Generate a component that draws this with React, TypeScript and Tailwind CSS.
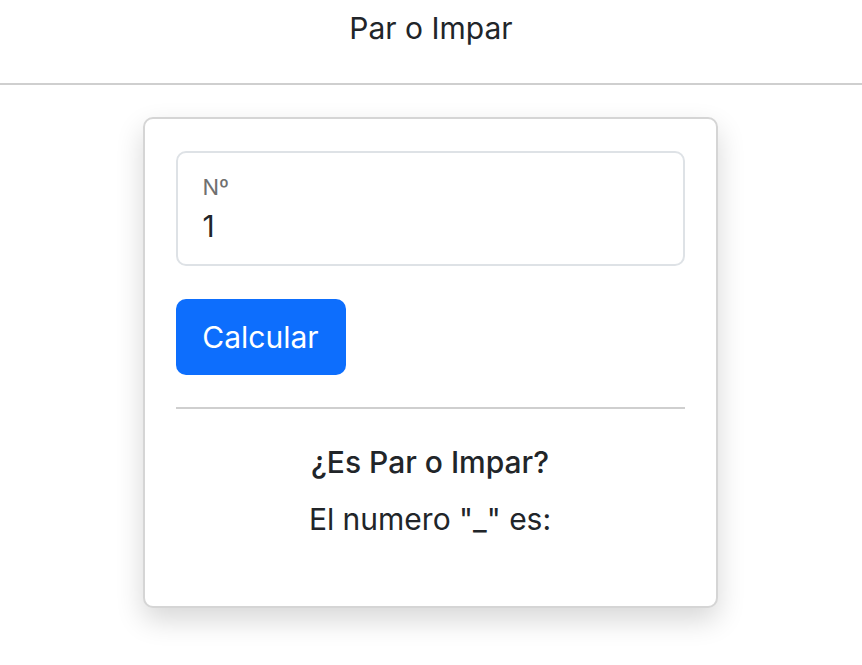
import { useState } from "react";

const App = () => {
  const [num, setNum] = useState<string>("1");

  return (
    <div className="min-h-screen bg-white text-[#212529] font-['Inter','Liberation_Sans',sans-serif]">
      <header className="flex h-[85px] items-start justify-center border-b-2 border-[#cfcfcf] pt-[9px]">
        <h1 className="text-[30px] leading-[38px]">Par o Impar</h1>
      </header>

      <main className="flex justify-center pt-[32px] pr-[2px]">
        <section className="w-[575px] rounded-[10px] border-2 border-[#d5d5d5] bg-white px-[31px] pt-[32px] pb-[69px] shadow-[0_12px_28px_rgba(0,0,0,0.16)]">
          <div className="flex h-[115px] flex-col rounded-[10px] border-2 border-[#dee2e6] px-[25px] pt-[20px]">
            <label htmlFor="num" className="text-[22px] leading-[28px] text-[#707070]">
              Nº
            </label>
            <input
              id="num"
              type="text"
              value={num}
              onChange={(e) => setNum(e.target.value)}
              className="mt-[6px] bg-transparent text-[30px] leading-[38px] outline-none"
            />
          </div>

          <button
            type="button"
            className="mt-[33px] h-[76px] w-[170px] rounded-[10px] bg-[#0d6efd] text-[30px] text-white"
          >
            Calcular
          </button>

          <hr className="mt-[32px] border-t-2 border-[#cfcfcf]" />

          <div className="flex flex-col items-center pt-[35px]">
            <h2 className="text-[30px] font-medium leading-[36px]">¿Es Par o Impar?</h2>
            <p className="mt-[21px] text-[30px] leading-[36px]">El numero "_" es:</p>
          </div>
        </section>
      </main>
    </div>
  );
};

export default App;
